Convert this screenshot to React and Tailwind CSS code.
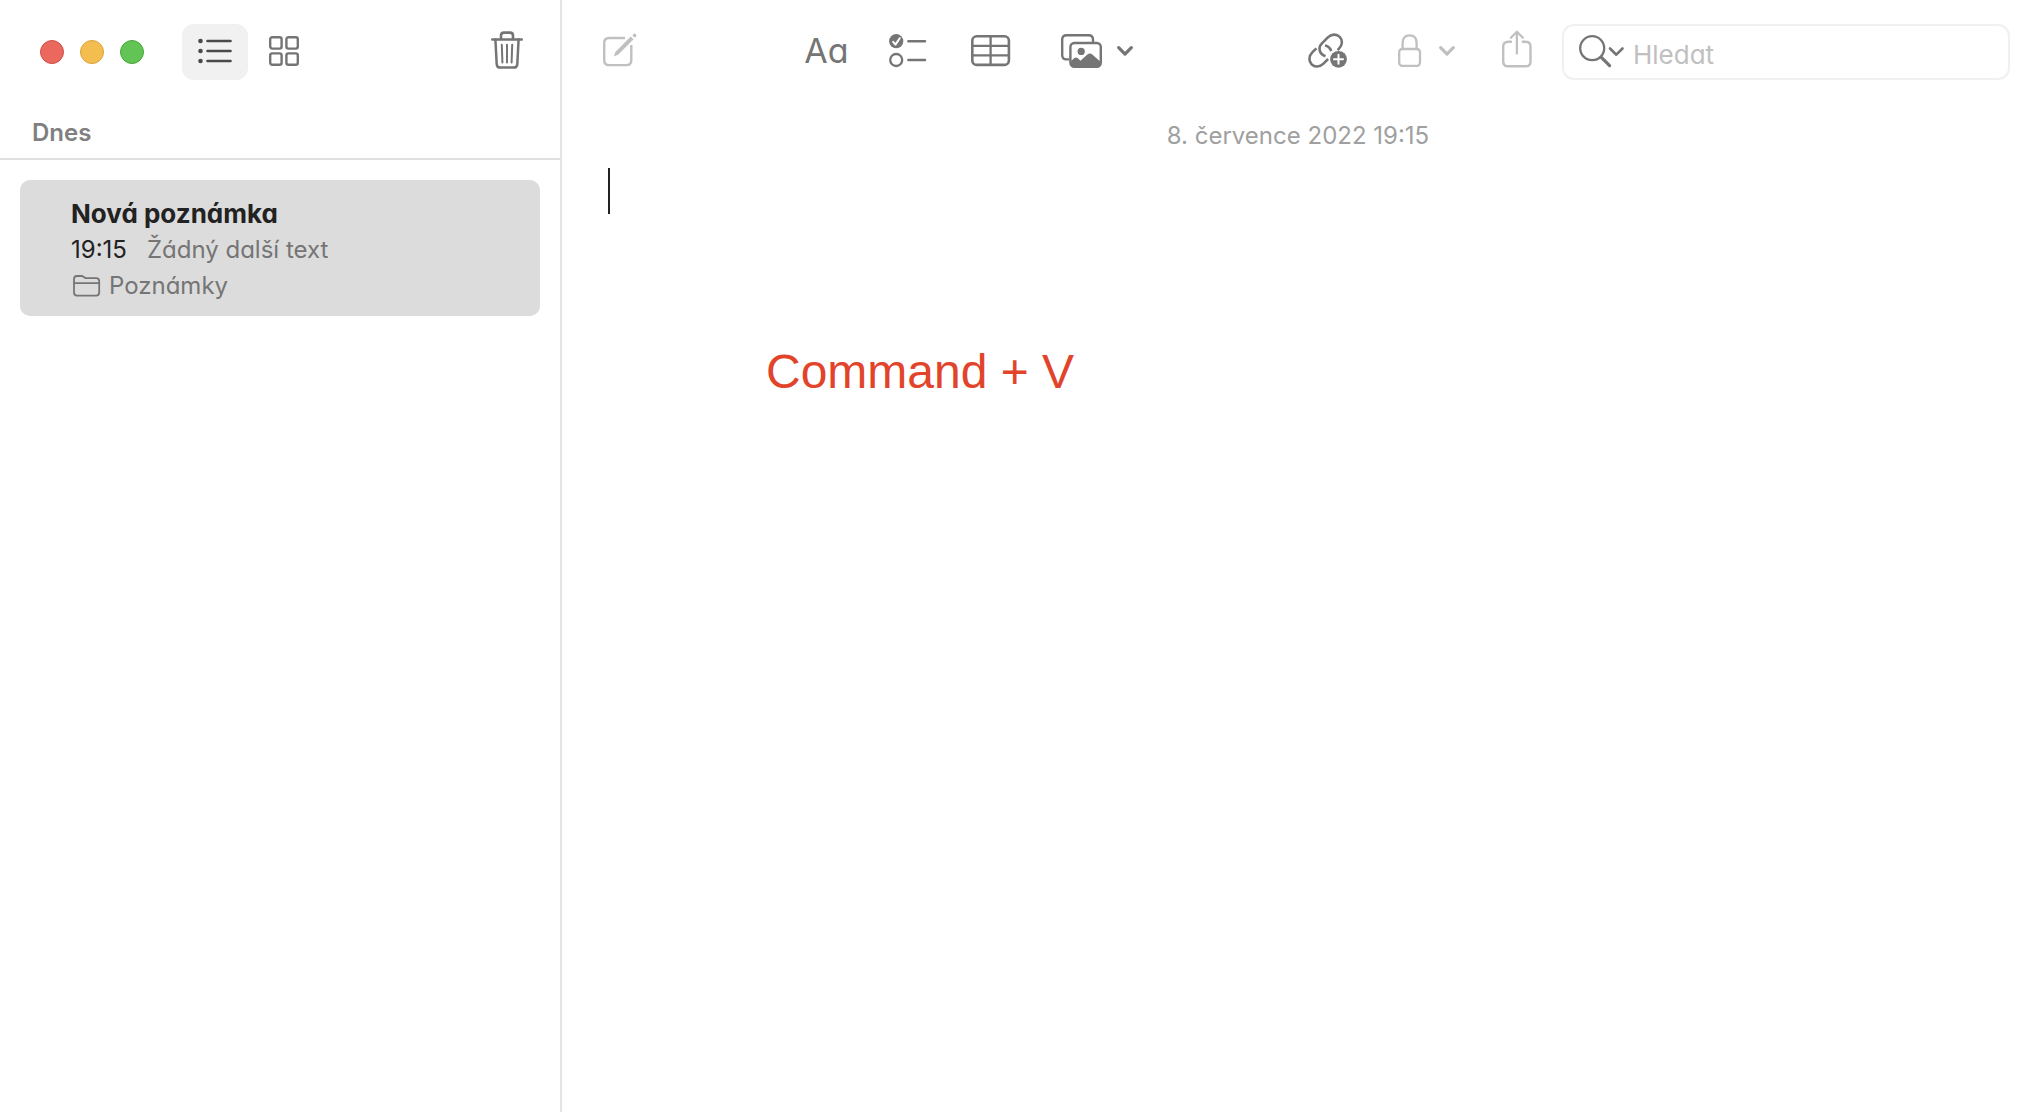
import { useState } from "react";

const WINDOW_BUTTONS = [
  { label: "Zavřít", color: "bg-[#ea685e] border-[#cf5047]" },
  { label: "Minimalizovat", color: "bg-[#f3bd4f] border-[#d8a23b]" },
  { label: "Zvětšit", color: "bg-[#61c454] border-[#4aa73d]" },
];

function Icon({ width, height, className = "", children }) {
  return (
    <svg
      width={width}
      height={height}
      viewBox={`0 0 ${width} ${height}`}
      fill="none"
      stroke="currentColor"
      strokeWidth="2"
      strokeLinecap="round"
      strokeLinejoin="round"
      className={`shrink-0 ${className}`}
      aria-hidden="true"
    >
      {children}
    </svg>
  );
}

function ListIcon() {
  return (
    <Icon width={34} height={26}>
      <g fill="currentColor" stroke="none">
        <circle cx="2.5" cy="3" r="2.3" />
        <circle cx="2.5" cy="13" r="2.3" />
        <circle cx="2.5" cy="23" r="2.3" />
      </g>
      <path d="M9.5 3h23M9.5 13h23M9.5 23h23" strokeWidth="2.6" />
    </Icon>
  );
}

function GridIcon() {
  return (
    <Icon width={30} height={30}>
      <g strokeWidth="2.4">
        <rect x="1.2" y="1.2" width="11.4" height="11.4" rx="2" />
        <rect x="17.4" y="1.2" width="11.4" height="11.4" rx="2" />
        <rect x="1.2" y="17.4" width="11.4" height="11.4" rx="2" />
        <rect x="17.4" y="17.4" width="11.4" height="11.4" rx="2" />
      </g>
    </Icon>
  );
}

function TrashIcon() {
  return (
    <Icon width={32} height={38}>
      <path d="M1.2 8.5h29.6" strokeWidth="2.4" />
      <path d="M10 8V4.6C10 2.7 11 1.6 13 1.6h6c2 0 3 1.1 3 3V8" strokeWidth="2.6" />
      <path d="M4.4 8.5l1.3 24.6c.1 2.2 1.4 3.5 3.5 3.5h13.6c2.1 0 3.4-1.3 3.5-3.5l1.3-24.6" strokeWidth="2.5" />
      <path d="M10.8 13.8l.6 17.6M16 13.8v17.6M21.2 13.8l-.6 17.6" strokeWidth="2" />
    </Icon>
  );
}

function ComposeIcon() {
  return (
    <Icon width={34} height={34}>
      <path
        d="M22 5H6.2C2.9 5 1.2 6.7 1.2 9.9v17.3c0 3.2 1.7 4.9 5 4.9h17.2c3.2 0 4.9-1.7 4.9-4.9V12"
        strokeWidth="2.4"
        strokeLinecap="butt"
      />
      <path d="M27.7 3.4l2.9 2.9-15.5 15.4-4.3 1.9 1.6-4.5z" fill="currentColor" stroke="none" />
      <path d="M31.5 2.4l.2.2" strokeWidth="3.4" />
    </Icon>
  );
}

function ChecklistIcon() {
  return (
    <Icon width={38} height={34}>
      <circle cx="7.2" cy="7.2" r="7.1" fill="currentColor" stroke="none" />
      <path d="M4.2 7.8l2.3 2.8 4.2-6.4" stroke="white" strokeWidth="2" />
      <circle cx="7.2" cy="26" r="6" strokeWidth="2.3" />
      <path d="M19.4 7.2h16.6M19.4 26h16.6" strokeWidth="2.5" />
    </Icon>
  );
}

function TableIcon() {
  return (
    <Icon width={40} height={32}>
      <rect x="1.3" y="1.3" width="36.6" height="28.6" rx="4.4" strokeWidth="2.6" />
      <path d="M19.6 1.3v28.6M1.3 10.9h36.6M1.3 20.4h36.6" strokeWidth="2.3" />
    </Icon>
  );
}

function PhotosIcon() {
  return (
    <Icon width={42} height={34}>
      <path
        d="M8.4 25.4H5.6c-2.9 0-4.4-1.5-4.4-4.4V5.6c0-2.9 1.5-4.4 4.4-4.4h22c2.9 0 4.4 1.5 4.4 4.4V8"
        strokeWidth="2.4"
        strokeLinecap="butt"
      />
      <rect x="9.4" y="9" width="30.4" height="23.8" rx="4" strokeWidth="2.4" />
      <circle cx="20.2" cy="17.4" r="3.6" fill="currentColor" stroke="none" />
      <path
        d="M9.4 27.4l3.7-3.1c1.3-1.1 2.6-1.1 3.8 0l2.6 2.4 6.9-6.2c1.7-1.5 3.2-1.5 4.9 0l8.5 7.5v1.4c0 2.3-1.3 3.4-3.6 3.4H13c-2.4 0-3.6-1.2-3.6-3.4z"
        fill="currentColor"
        stroke="none"
      />
    </Icon>
  );
}

function ChevronIcon() {
  return (
    <Icon width={16} height={10}>
      <path d="M1.7 1.7L8 8.1l6.3-6.4" strokeWidth="3.2" />
    </Icon>
  );
}

function LinkPlusIcon() {
  return (
    <Icon width={40} height={36}>
      <g strokeWidth="2.6" strokeLinecap="butt">
        <path d="M17.5 23.2c-3.1-1.1-5.4-3.5-5.9-6.5-.4-2.6.5-4.6 2.3-6.4l5.7-5.7c3.8-3.8 9-3.9 12.1-.8 3.1 3.1 3 8.1-.7 11.9l-1.4 1.4" />
        <path d="M17 12.4c3 .6 5.3 2.7 6.2 5.6" />
        <path d="M8.4 15.3l-3.9 3.9C.8 23 .5 28.1 3.6 31.3c3.1 3.1 8.1 3 11.9-.7l4.600-4.600" />
      </g>
      <circle cx="30.5" cy="26.3" r="8.4" fill="currentColor" stroke="none" />
      <path d="M30.5 21.8v9M26 26.3h9" stroke="white" strokeWidth="2" />
    </Icon>
  );
}

function LockIcon() {
  return (
    <Icon width={24} height={34}>
      <rect x="1.2" y="15" width="20.8" height="16.8" rx="3" strokeWidth="2.3" />
      <path d="M4.6 15V9c0-4.8 2.7-7.6 7-7.6s7 2.8 7 7.6v6" strokeWidth="2.3" />
    </Icon>
  );
}

function ShareIcon() {
  return (
    <Icon width={30} height={38}>
      <path
        d="M9 11.7H6.2c-3.3 0-5 1.7-5 4.9v14.8c0 3.2 1.7 4.9 5 4.9h17.4c3.2 0 4.9-1.7 4.9-4.9V16.6c0-3.2-1.7-4.9-4.9-4.900h-2.800"
        strokeWidth="2.4"
      />
      <path d="M14.9 23.5V1.8M8.9 7.7l6-6 6 6" strokeWidth="2.3" />
    </Icon>
  );
}

function SearchIcon() {
  return (
    <Icon width={48} height={34}>
      <circle cx="13.2" cy="13.2" r="12" strokeWidth="2.3" />
      <path d="M22.3 22.3l8.3 8.3" strokeWidth="3.2" />
      <path d="M31 13.5l6.3 6.2 6.2-6.2" strokeWidth="2.6" />
    </Icon>
  );
}

function FolderIcon() {
  return (
    <Icon width={28} height={22}>
      <path
        d="M1 17.6V4c0-2 1-3 3-3h4.3c1 0 1.7.3 2.4.9l.7.6c.6.5 1.1.7 2 .7h9.8c2 0 3 1 3 3v11.4c0 2-1 3-3 3H4c-2 0-3-1-3-3z"
        strokeWidth="1.8"
      />
      <path d="M1 8.2h25.2" strokeWidth="1.8" />
    </Icon>
  );
}

function ToolButton({ label, className = "", children }) {
  return (
    <button type="button" aria-label={label} className={`flex items-center ${className}`}>
      {children}
    </button>
  );
}

function Sidebar() {
  const [view, setView] = useState("list");

  return (
    <aside className="w-[562px] shrink-0 border-r-2 border-[#e4e4e4]">
      <div className="flex h-[104px] items-center pr-[37px] pl-10">
        <div className="flex gap-4">
          {WINDOW_BUTTONS.map((button) => (
            <button
              key={button.label}
              type="button"
              aria-label={button.label}
              className={`size-6 rounded-full border ${button.color}`}
            />
          ))}
        </div>
        <button
          type="button"
          aria-label="Seznam"
          aria-pressed={view === "list"}
          onClick={() => setView("list")}
          className={`ml-[38px] flex h-14 w-[66px] items-center justify-center rounded-xl pb-0.5 text-[#4a4a4a] ${
            view === "list" ? "bg-[#f1f1f1]" : ""
          }`}
        >
          <ListIcon />
        </button>
        <button
          type="button"
          aria-label="Galerie"
          aria-pressed={view === "gallery"}
          onClick={() => setView("gallery")}
          className={`flex h-14 w-[72px] items-center justify-center rounded-xl pb-0.5 text-[#757575] ${
            view === "gallery" ? "bg-[#f1f1f1]" : ""
          }`}
        >
          <GridIcon />
        </button>
        <ToolButton label="Smazat" className="ml-auto pb-1 text-[#757575]">
          <TrashIcon />
        </ToolButton>
      </div>

      <h2 className="h-14 border-b-2 border-[#e0e0e0] pt-[13px] pl-8 text-2xl font-semibold text-[#808080]">
        Dnes
      </h2>

      <ul className="p-5">
        <li>
          <button
            type="button"
            className="flex h-[136px] w-full flex-col items-start rounded-[10px] bg-[#dcdcdc] pt-4 pl-[51px] text-left text-2xl/9 text-[#757575]"
          >
            <span className="text-[26px]/9 font-bold text-[#222222]">Nová poznámka</span>
            <span className="flex gap-5">
              <span className="text-[#222222]">19:15</span>
              <span>Žádný další text</span>
            </span>
            <span className="flex items-center gap-2 pl-0.5">
              <FolderIcon />
              Poznámky
            </span>
          </button>
        </li>
      </ul>
    </aside>
  );
}

function Toolbar() {
  return (
    <header className="flex h-[104px] items-center justify-between pr-6 pl-[41px] text-[#757575]">
      <ToolButton label="Nová poznámka" className="pb-1 text-[#c0c0c0]">
        <ComposeIcon />
      </ToolButton>

      <div className="flex items-center gap-10 pr-2 pb-0.5">
        <ToolButton label="Formát" className="text-[34px]/10">
          Aa
        </ToolButton>
        <ToolButton label="Seznam úkolů">
          <ChecklistIcon />
        </ToolButton>
        <ToolButton label="Tabulka" className="px-1">
          <TableIcon />
        </ToolButton>
        <ToolButton label="Média" className="gap-3.5 pl-1.5">
          <PhotosIcon />
          <ChevronIcon />
        </ToolButton>
      </div>

      <div className="flex items-center">
        <ToolButton label="Přidat odkaz" className="pb-0.5">
          <LinkPlusIcon />
        </ToolButton>
        <ToolButton label="Zamknout" className="ml-[50px] gap-[17px] pb-0.5 text-[#c0c0c0]">
          <LockIcon />
          <ChevronIcon />
        </ToolButton>
        <ToolButton label="Sdílet" className="ml-[47px] pb-1.5 text-[#c0c0c0]">
          <ShareIcon />
        </ToolButton>
        <div className="ml-[30px] flex h-14 w-[448px] items-center rounded-xl border-2 border-[#f0f0f0] pl-[15px]">
          <ToolButton label="Možnosti hledání">
            <SearchIcon />
          </ToolButton>
          <input
            type="search"
            aria-label="Hledat"
            placeholder="Hledat"
            className="ml-1.5 w-full min-w-0 bg-transparent pt-1.5 text-[26px]/8 outline-none placeholder:text-[#c0c0c0]"
          />
        </div>
      </div>
    </header>
  );
}

export default function App() {
  return (
    <div className="flex min-h-screen bg-white font-['Inter','Noto_Sans',sans-serif] [font-feature-settings:'cv11']">
      <Sidebar />
      <main className="min-w-0 flex-1">
        <Toolbar />
        <time dateTime="2022-07-08T19:15" className="block pt-4 text-center text-2xl text-[#a0a0a0]">
          8. července 2022 19:15
        </time>
        <div className="px-[46px] pt-4">
          {/* text caret */}
          <div className="h-[46px] w-0.5 bg-[#222222]" />
          <p className="mt-32 pl-[158px] font-['Liberation_Sans',Arial,sans-serif] text-5xl/[60px] text-[#e2442b]">
            Command + V
          </p>
        </div>
      </main>
    </div>
  );
}
